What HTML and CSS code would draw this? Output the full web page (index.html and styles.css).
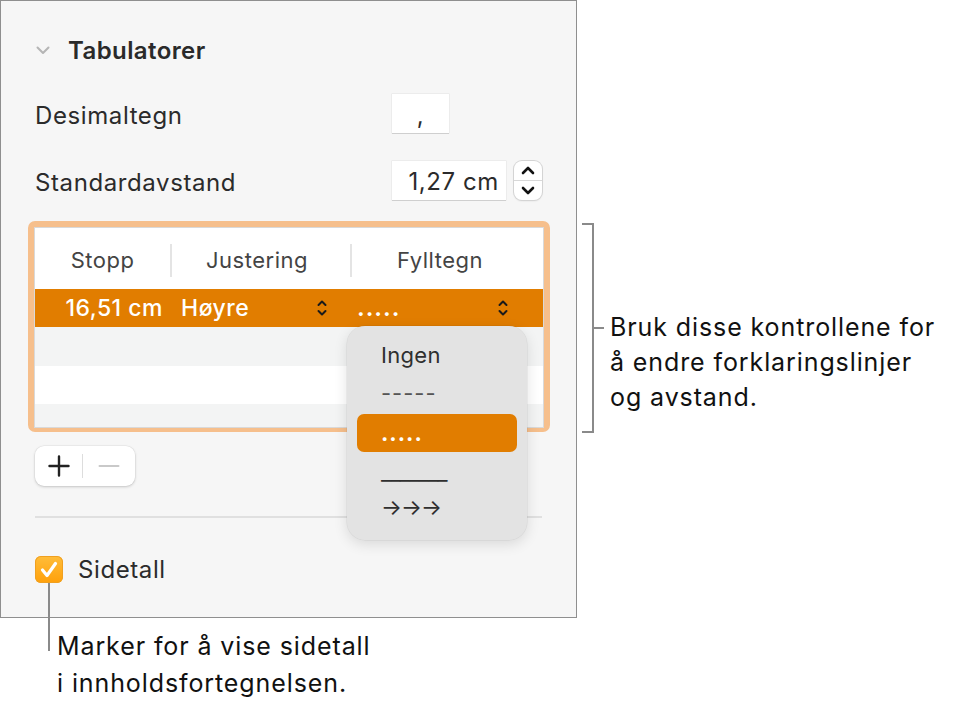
FILE: index.html
```html
<!DOCTYPE html>
<html lang="no">
<head>
    <meta charset="UTF-8">
    <meta name="viewport" content="width=device-width, initial-scale=1.0">
    <title>Tabulatorer</title>
    <link rel="stylesheet" href="styles.css">
</head>
<body>
    <div class="page">
        <div class="left">
            <div class="panel">
                <div class="section-head">
                    <svg class="chevron" width="14" height="9" viewBox="0 0 14 9"><path d="M1.5 1.5 L7 7 L12.5 1.5" fill="none" stroke="#b5b5b5" stroke-width="2" stroke-linecap="round" stroke-linejoin="round"/></svg>
                    <span>Tabulatorer</span>
                </div>

                <div class="field first">
                    <span class="label">Desimaltegn</span>
                    <div class="box small">,</div>
                </div>
                <div class="field">
                    <span class="label">Standardavstand</span>
                    <div class="box wide">1,27 cm</div>
                    <div class="stepper">
                        <svg width="28" height="39" viewBox="0 0 28 39">
                            <line x1="0" y1="19.5" x2="28" y2="19.5" stroke="#d8d8d8" stroke-width="1"/>
                            <path d="M9 12 L14 7 L19 12" fill="none" stroke="#111" stroke-width="2.6" stroke-linecap="round" stroke-linejoin="round"/>
                            <path d="M9 27 L14 32 L19 27" fill="none" stroke="#111" stroke-width="2.6" stroke-linecap="round" stroke-linejoin="round"/>
                        </svg>
                    </div>
                </div>

                <div class="tabs-frame">
                    <div class="tabs">
                        <div class="tabs-head">
                            <div class="col c1">Stopp</div>
                            <div class="col c2">Justering</div>
                            <div class="col c3">Fylltegn</div>
                        </div>
                        <div class="tab-row selected">
                            <div class="col c1 stop">16,51 cm</div>
                            <div class="col c2 pop">
                                <span>Høyre</span>
                                <svg class="updown" width="10" height="18" viewBox="0 0 10 18"><path d="M1.5 6 L5 2.5 L8.5 6 M1.5 12 L5 15.5 L8.5 12" fill="none" stroke="#1a1a1a" stroke-width="2" stroke-linecap="round" stroke-linejoin="round"/></svg>
                            </div>
                            <div class="col c3 pop">
                                <span class="dots">.....</span>
                                <svg class="updown" width="10" height="18" viewBox="0 0 10 18"><path d="M1.5 6 L5 2.5 L8.5 6 M1.5 12 L5 15.5 L8.5 12" fill="none" stroke="#1a1a1a" stroke-width="2" stroke-linecap="round" stroke-linejoin="round"/></svg>
                            </div>
                        </div>
                        <div class="tab-row alt"></div>
                        <div class="tab-row"></div>
                        <div class="tab-row alt"></div>
                    </div>

                    <ul class="menu">
                        <li class="none">Ingen</li>
                        <li class="dash">-----</li>
                        <li class="active"><span class="dots">.....</span></li>
                        <li class="under">_______</li>
                        <li class="arrows">→→→</li>
                    </ul>
                </div>

                <div class="addremove">
                    <span class="plus">
                        <svg width="22" height="22" viewBox="0 0 22 22"><path d="M11 1.5 V20.5 M1.5 11 H20.5" stroke="#222" stroke-width="2.4" stroke-linecap="round"/></svg>
                    </span>
                    <span class="sep"></span>
                    <span class="minus">
                        <svg width="22" height="4" viewBox="0 0 22 4"><path d="M1.5 2 H20.5" stroke="#c9c9c9" stroke-width="2" stroke-linecap="round"/></svg>
                    </span>
                </div>

                <div class="divider"></div>

                <div class="check-row">
                    <span class="checkbox">
                        <svg width="28" height="27" viewBox="0 0 28 27"><path d="M7.5 14 L12 19.5 L20.5 7.5" fill="none" stroke="#fff" stroke-width="3.2" stroke-linecap="round" stroke-linejoin="round"/></svg>
                    </span>
                    <span>Sidetall</span>
                    <span class="leader"></span>
                </div>
            </div>

            <div class="note bottom">Marker for å vise sidetall<br>i innholdsfortegnelsen.</div>
        </div>

        <div class="right">
            <div class="bracket"></div>
            <div class="note side">Bruk disse kontrollene for<br>å endre forklaringslinjer<br>og avstand.</div>
        </div>
    </div>
</body>
</html>
```

FILE: styles.css
```css
body {
    margin: 0;
    background: #fff;
    font-family: Inter, "Liberation Sans", sans-serif;
    color: #2b2b2b;
}
.page {
    display: flex;
    align-items: flex-start;
}
.left {
    width: 577px;
}
.panel {
    box-sizing: border-box;
    width: 577px;
    height: 618px;
    background: #f6f6f6;
    border: 1px solid #8f8f8f;
    padding: 31px 34px 0 34px;
    font-size: 24px;
    letter-spacing: 0.6px;
}

/* section header */
.section-head {
    display: flex;
    align-items: center;
    height: 36px;
    font-weight: 600;
    font-size: 24px;
    letter-spacing: 0.4px;
    color: #2a2a2a;
}
.chevron {
    margin: 0 18px 0 1px;
}

/* label + input rows */
.field {
    display: flex;
    align-items: center;
    height: 39px;
    margin-top: 28px;
}
.field.first {
    margin-top: 26px;
}
.label {
    width: 357px;
    flex-shrink: 0;
    padding-top: 3px;
}
.box {
    box-sizing: border-box;
    height: 39px;
    background: #fff;
    box-shadow: 0 1px 0 #cfcfcf, 0 0 0 0.5px #e2e2e2;
    text-align: right;
    line-height: 41px;
}
.box.small {
    width: 57px;
    text-align: center;
    line-height: 44px;
}
.box.wide {
    width: 114px;
    padding-right: 7px;
}
.stepper {
    width: 28px;
    height: 39px;
    margin-left: 8px;
    background: #fff;
    border-radius: 8px;
    box-shadow: 0 0 0 1px #d4d4d4, 0 1px 2px rgba(0,0,0,0.12);
}
.stepper svg {
    display: block;
}

/* tab stop table */
.tabs-frame {
    position: relative;
    box-sizing: border-box;
    width: 522px;
    height: 211px;
    margin: 21px 0 0 -7px;
    border: 6px solid #f6bf8c;
    border-radius: 7px;
    letter-spacing: 0.5px;
}
.tabs {
    height: 100%;
    background: #fff;
    border: 1px solid #d9d9d9;
    overflow: hidden;
}
.tabs-head,
.tab-row {
    display: flex;
}
.tabs-head {
    height: 61px;
    align-items: center;
    color: #444;
    font-size: 22px;
    padding-top: 4px;
    box-sizing: border-box;
}
.col {
    box-sizing: border-box;
}
.c1 { width: 137px; }
.c2 { width: 180px; }
.c3 { width: 190px; }
.tabs-head .col {
    text-align: center;
    height: 33px;
    line-height: 33px;
}
.tabs-head .c1,
.tabs-head .c2 {
    border-right: 2px solid #e4e4e4;
}
.tabs-head .c2 { padding-right: 8px; }
.tabs-head .c3 { padding-right: 14px; }
.tab-row {
    height: 38px;
}
.tab-row.alt {
    background: #f3f4f4;
    height: 39px;
}
.tab-row.selected {
    background: #e17d00;
    color: #fff;
    font-weight: 500;
    font-size: 23px;
    align-items: center;
}
.stop {
    text-align: right;
    padding-right: 9px;
}
.pop {
    display: flex;
    align-items: center;
    justify-content: space-between;
}
.c2.pop { padding: 0 25px 0 9px; }
.c3.pop { padding: 0 34px 0 5px; }
.dots {
    font-weight: 700;
    letter-spacing: 1px;
}
.updown {
    display: block;
}

/* fill character menu */
.menu {
    position: absolute;
    left: 313px;
    top: 99px;
    z-index: 2;
    width: 180px;
    box-sizing: border-box;
    margin: 0;
    padding: 8px 10px 16px;
    list-style: none;
    background: #e3e3e3;
    border-radius: 18px;
    box-shadow: 0 4px 14px rgba(0,0,0,0.12), 0 0 0 0.5px rgba(0,0,0,0.08);
    font-size: 22px;
    letter-spacing: 0.3px;
    color: #2f2f2f;
}
.menu li {
    height: 38px;
    line-height: 38px;
    padding-left: 24px;
    border-radius: 7px;
    margin-bottom: 2px;
}
.menu li.none {
    line-height: 42px;
}
.menu li.dash {
    color: #555;
    letter-spacing: 1px;
}
.menu li.active {
    background: #e17d00;
    color: #fff;
}
.menu li.under {
    letter-spacing: -0.6px;
    height: 36px;
    line-height: 36px;
    margin-bottom: 0;
}
.menu li.arrows {
    letter-spacing: -1px;
    height: 34px;
    line-height: 34px;
    margin-bottom: 0;
}

/* add / remove */
.addremove {
    display: flex;
    align-items: center;
    width: 100px;
    height: 40px;
    margin-top: 14px;
    background: #fff;
    border-radius: 9px;
    box-shadow: 0 1px 3px rgba(0,0,0,0.18), 0 0 0 0.5px rgba(0,0,0,0.06);
}
.plus,
.minus {
    display: flex;
    justify-content: center;
    align-items: center;
}
.plus {
    width: 46px;
    padding-left: 1px;
}
.sep {
    width: 1px;
    height: 24px;
    background: #ddd;
}
.minus {
    width: 52px;
}

.divider {
    height: 2px;
    background: #e0e0e0;
    margin-top: 30px;
    width: 507px;
}

/* page number option */
.check-row {
    position: relative;
    display: flex;
    align-items: center;
    margin-top: 37px;
    height: 28px;
}
.checkbox {
    width: 28px;
    height: 27px;
    margin-right: 15px;
    border-radius: 6px;
    background: linear-gradient(#ffbd3a, #ffa00a);
    box-shadow: 0 0 0 1px #f0a020 inset;
}
.checkbox svg {
    display: block;
}
.leader {
    position: absolute;
    left: 13px;
    top: 28px;
    width: 2px;
    height: 68px;
    background: #8a8a8a;
}

/* callouts */
.note {
    font-size: 25px;
    letter-spacing: 0.9px;
    color: #111;
}
.note.bottom {
    margin-top: 10px;
    padding-left: 57px;
    line-height: 37px;
}
.right {
    display: flex;
    align-items: flex-start;
    margin-left: 5px;
}
.bracket {
    position: relative;
    width: 10px;
    height: 206px;
    margin-top: 223px;
    border: 2px solid #8a8a8a;
    border-left: none;
}
.bracket::after {
    content: "";
    position: absolute;
    right: -12px;
    top: 102px;
    width: 10px;
    height: 2px;
    background: #8a8a8a;
}
.note.side {
    margin: 310px 0 0 16px;
    line-height: 35px;
}
```
